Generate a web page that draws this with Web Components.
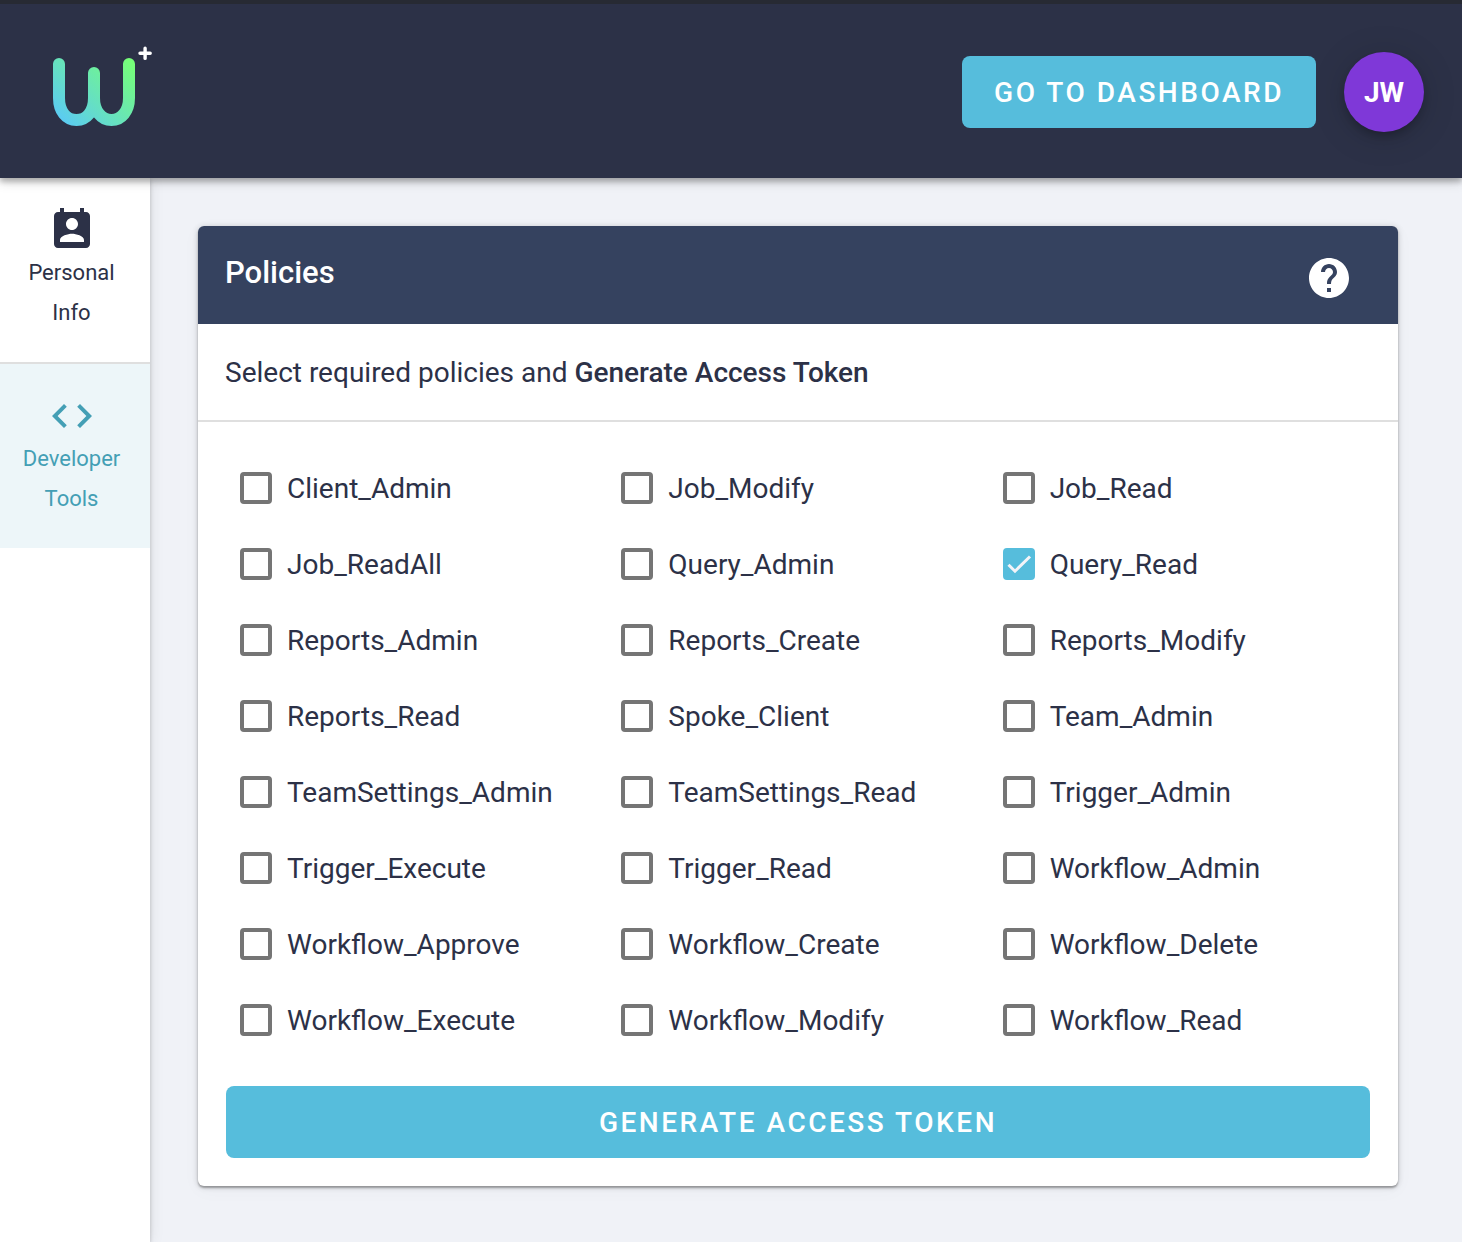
<!DOCTYPE html>
<html lang="en">
<head>
<meta charset="utf-8">
<meta name="viewport" content="width=device-width, initial-scale=1">
<title>Developer Tools</title>
<style>
  :root {
    --ink: #2c3147;
    --panel: #35425f;
    --accent: #56bddc;
    --accent-dark: #449fb5;
    --accent-soft: #edf6f9;
    --canvas: #f0f2f7;
    --line: #dfdfdf;
  }
  body {
    margin: 0;
    background: var(--canvas);
    color: var(--ink);
    font-family: Roboto, "Liberation Sans", sans-serif;
    font-size: 28px;
    line-height: 40px;
  }
  strong { font-weight: 500; }
</style>
</head>
<body>
<app-shell>
  <app-header slot="header">
    <brand-logo slot="brand"></brand-logo>
    <action-button>GO TO DASHBOARD</action-button>
    <user-avatar>JW</user-avatar>
  </app-header>
  <side-nav slot="nav">
    <nav-item icon="contact">Personal Info</nav-item>
    <nav-item icon="code" active>Developer Tools</nav-item>
  </side-nav>
  <policy-card heading="Policies">
    <span slot="intro">Select required policies and <strong>Generate Access Token</strong></span>
    <policy-option>Client_Admin</policy-option>
    <policy-option>Job_Modify</policy-option>
    <policy-option>Job_Read</policy-option>
    <policy-option>Job_ReadAll</policy-option>
    <policy-option>Query_Admin</policy-option>
    <policy-option checked>Query_Read</policy-option>
    <policy-option>Reports_Admin</policy-option>
    <policy-option>Reports_Create</policy-option>
    <policy-option>Reports_Modify</policy-option>
    <policy-option>Reports_Read</policy-option>
    <policy-option>Spoke_Client</policy-option>
    <policy-option>Team_Admin</policy-option>
    <policy-option>TeamSettings_Admin</policy-option>
    <policy-option>TeamSettings_Read</policy-option>
    <policy-option>Trigger_Admin</policy-option>
    <policy-option>Trigger_Execute</policy-option>
    <policy-option>Trigger_Read</policy-option>
    <policy-option>Workflow_Admin</policy-option>
    <policy-option>Workflow_Approve</policy-option>
    <policy-option>Workflow_Create</policy-option>
    <policy-option>Workflow_Delete</policy-option>
    <policy-option>Workflow_Execute</policy-option>
    <policy-option>Workflow_Modify</policy-option>
    <policy-option>Workflow_Read</policy-option>
    <action-button slot="action" block>GENERATE ACCESS TOKEN</action-button>
  </policy-card>
</app-shell>
<script>
  const define = (name, render) => customElements.define(name, class extends HTMLElement {
    constructor() {
      super();
      this.attachShadow({ mode: "open" });
    }
    connectedCallback() {
      this.shadowRoot.innerHTML = "<style>*{box-sizing:border-box}</style>" + render(this);
    }
  });

  define("app-shell", () => `
    <style>
      :host { display: flex; flex-direction: column; min-height: 100vh; }
      .body { display: flex; flex: 1; }
      main { flex: 1; min-width: 0; padding: 48px 64px 56px 48px; }
    </style>
    <slot name="header"></slot>
    <div class="body">
      <slot name="nav"></slot>
      <main><slot></slot></main>
    </div>`);

  define("app-header", () => `
    <style>
      :host { display: block; position: relative; z-index: 2; }
      header {
        display: flex; align-items: center; gap: 28px;
        padding: 48px 38px 46px 52px;
        background: var(--ink);
        border-top: 4px solid #272a33;
        box-shadow: 0 4px 5px rgba(0,0,0,.2), 0 2px 12px rgba(0,0,0,.24);
      }
      .brand { flex: 1; }
    </style>
    <header><div class="brand"><slot name="brand"></slot></div><slot></slot></header>`);

  define("brand-logo", () => `
    <style>
      :host { display: block; }
      a { display: inline-block; vertical-align: top; }
      svg { display: block; overflow: visible; }
    </style>
    <a href="#" aria-label="Home">
      <svg width="101" height="80" viewBox="52 52 101 80" fill="none" stroke-linecap="round">
        <defs>
          <linearGradient id="g" gradientUnits="userSpaceOnUse" x1="66" y1="126" x2="130" y2="62">
            <stop stop-color="#5bcbf3"/><stop offset="1" stop-color="#76ff79"/>
          </linearGradient>
        </defs>
        <path stroke="url(#g)" stroke-width="12" d="M59 64V98C59 111 66 120 76.500 120S94 111 94 98V73M94 98C94 111 101.500 120 111.500 120S129 111 129 98V64"/>
        <path stroke="#fff" stroke-width="3.400" d="M140 53.300H150.200M145.100 48.200V58.400"/>
      </svg>
    </a>`);

  define("action-button", el => `
    <style>
      :host { display: block; }
      button {
        display: block; width: ${el.hasAttribute("block") ? "100%" : "auto"};
        height: 72px; padding: 2px 32px 0; border: 0; border-radius: 8px;
        background: var(--accent); color: #fff; cursor: pointer;
        font: 500 28px/40px Roboto, "Liberation Sans", sans-serif;
        letter-spacing: 0.09em; white-space: nowrap;
      }
    </style>
    <button type="button"><slot></slot></button>`);

  define("user-avatar", () => `
    <style>
      :host { display: block; }
      button {
        display: grid; place-items: center; width: 80px; height: 80px;
        padding: 2px 0 0; border: 0; border-radius: 50%;
        background: #7f38d8; color: #fff; cursor: pointer;
        font: 700 28px/40px Roboto, "Liberation Sans", sans-serif;
        box-shadow: 0 6px 10px -2px rgba(0,0,0,.25), 0 4px 36px rgba(0,0,0,.14);
      }
    </style>
    <button type="button"><slot></slot></button>`);

  define("side-nav", () => `
    <style>
      :host { display: block; flex: none; width: 150px; position: relative; z-index: 1; background: #fff;
        box-shadow: 0 2px 4px rgba(0,0,0,.2), 0 0 14px rgba(0,0,0,.1); }
      nav { display: flex; flex-direction: column; }
    </style>
    <nav><slot></slot></nav>`);

  const navIcons = {
    contact: "M19 3h-1V1h-2v2H8V1H6v2H5c-1.110 0-2 .9-2 2v14c0 1.100.890 2 2 2h14c1.100 0 2-.9 2-2V5c0-1.100-.9-2-2-2zm-7 3c1.660 0 3 1.340 3 3s-1.340 3-3 3-3-1.340-3-3 1.340-3 3-3zm6 12H6v-1c0-2 4-3.100 6-3.100s6 1.100 6 3.100v1z",
    code: "M9.400 16.600L4.800 12l4.600-4.600L8 6l-6 6 6 6 1.400-1.400zm5.200 0l4.600-4.600-4.600-4.600L16 6l6 6-6 6-1.400-1.400z"
  };
  define("nav-item", el => `
    <style>
      :host { display: block; }
      :host(:not(:last-child)) { border-bottom: 2px solid var(--line); }
      a {
        display: flex; flex-direction: column; align-items: center;
        padding: 28px 21px 29px 14px;
        color: inherit; text-decoration: none; text-align: center;
        font-size: 22px; line-height: 40px;
      }
      :host([active]) a { background: var(--accent-soft); color: var(--accent-dark); }
      svg { display: block; fill: currentColor; }
    </style>
    <a href="#"${el.hasAttribute("active") ? ' aria-current="page"' : ""}>
      <svg width="48" height="47" viewBox="0 0 48 47" aria-hidden="true"><path transform="scale(2)" d="${navIcons[el.getAttribute("icon")]}"/></svg>
      <slot></slot>
    </a>`);

  define("policy-card", el => `
    <style>
      :host { display: block; }
      section { background: #fff; border-radius: 6px;
        box-shadow: 0 2px 2px rgba(0,0,0,.3), 0 1px 6px rgba(0,0,0,.18), 0 4px 20px rgba(0,0,0,.03); }
      header { display: flex; justify-content: space-between; align-items: flex-start;
        padding: 28px 45px 22px 27px; background: var(--panel); color: #fff; border-radius: 6px 6px 0 0; }
      h2 { margin: 0; font-size: 31px; line-height: 38px; font-weight: 500; }
      header button { display: block; padding: 0; border: 0; background: none; color: inherit; cursor: pointer; }
      svg { display: block; fill: currentColor; }
      p { margin: 0; padding: 29px 27px 27px; border-bottom: 2px solid var(--line); }
      form { padding: 28px; }
      .grid { display: grid; grid-template-columns: repeat(3, 1fr); margin-bottom: 28px; }
    </style>
    <section>
      <header>
        <h2>${el.getAttribute("heading")}</h2>
        <button type="button" aria-label="Help">
          <svg width="48" height="48" viewBox="0 0 24 24"><path d="M12 2C6.480 2 2 6.480 2 12s4.480 10 10 10 10-4.480 10-10S17.520 2 12 2zm1 17h-2v-2h2v2zm2.070-7.750l-.9.920C13.450 12.900 13 13.500 13 15h-2v-.5c0-1.100.450-2.100 1.170-2.830l1.240-1.260c.370-.360.590-.860.590-1.410 0-1.100-.9-2-2-2s-2 .9-2 2H8c0-2.210 1.790-4 4-4s4 1.790 4 4c0 .880-.360 1.680-.930 2.250z"/></svg>
        </button>
      </header>
      <p><slot name="intro"></slot></p>
      <form>
        <div class="grid"><slot></slot></div>
        <slot name="action"></slot>
      </form>
    </section>`);

  define("policy-option", el => `
    <style>
      :host { display: block; }
      label { display: flex; align-items: center; gap: 15px; padding: 17px 14px; cursor: pointer; }
      .text { padding-top: 2px; }
      .box { display: grid; flex: none; }
      input, svg { grid-area: 1 / 1; width: 32px; height: 32px; margin: 0; }
      input { appearance: none; border: 4px solid #757575; border-radius: 4px; background: #fff; }
      input:checked { border-color: var(--accent); background: var(--accent); }
      svg { display: none; fill: none; stroke: #f3f4f8; stroke-width: 3; pointer-events: none; }
      input:checked + svg { display: block; }
    </style>
    <label>
      <span class="box">
        <input type="checkbox"${el.hasAttribute("checked") ? " checked" : ""}>
        <svg viewBox="0 0 32 32" aria-hidden="true"><path d="M5.500 16.700L12 23.200L27 8.500"/></svg>
      </span>
      <span class="text"><slot></slot></span>
    </label>`);
</script>
</body>
</html>
